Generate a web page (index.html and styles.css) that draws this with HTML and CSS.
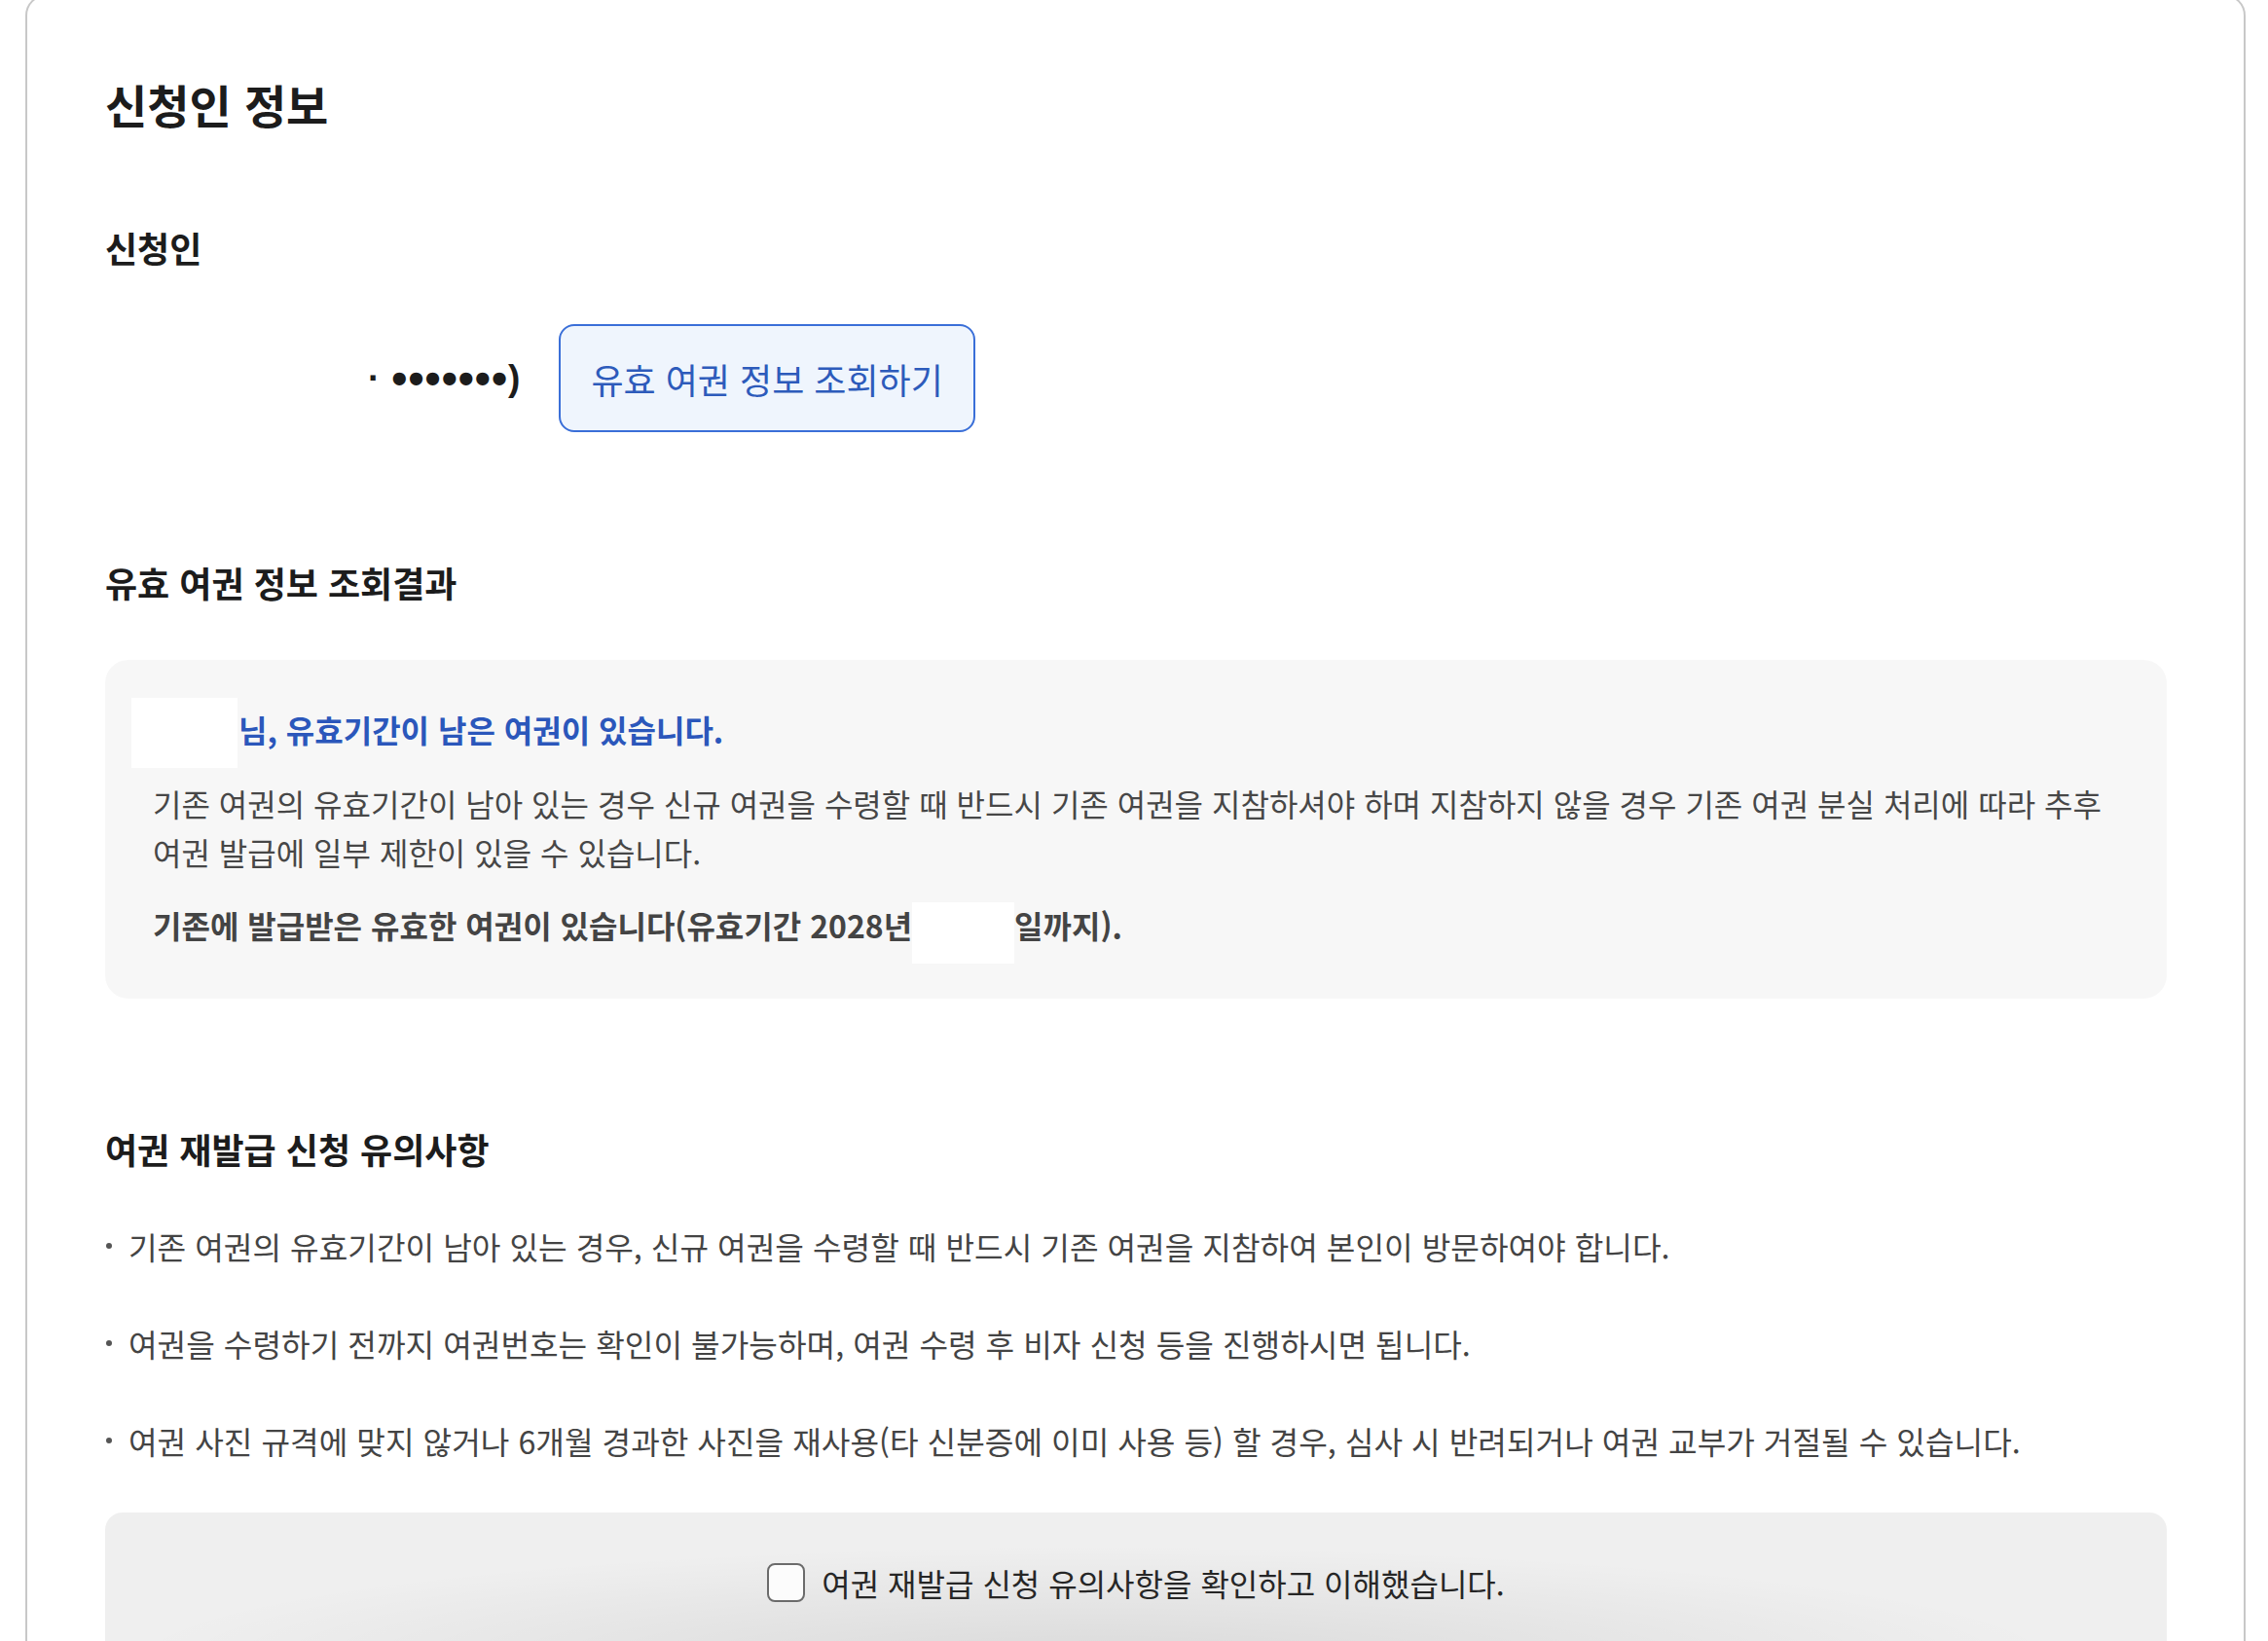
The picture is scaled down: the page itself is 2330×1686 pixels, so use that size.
FILE: index.html
```html
<!DOCTYPE html>
<html lang="ko">
<head>
<meta charset="utf-8">
<title>신청인 정보</title>
<link rel="stylesheet" href="styles.css">
</head>
<body>
<main class="card">
  <h2 class="page-title">신청인 정보</h2>

  <h3 class="section-title section-title--first">신청인</h3>
  <div class="applicant-row">
    <span class="mask mask--name"></span>
    <span class="id-text"><span class="id-sep">·</span><span class="id-dots">•••••••</span>)</span>
    <button type="button" class="lookup-btn">유효 여권 정보 조회하기</button>
  </div>

  <h3 class="section-title section-title--result">유효 여권 정보 조회결과</h3>
  <section class="result-box">
    <div class="result-title"><span class="mask mask--title"></span><span class="result-title-text">님, 유효기간이 남은 여권이 있습니다.</span></div>
    <p class="result-desc">기존 여권의 유효기간이 남아 있는 경우 신규 여권을 수령할 때 반드시 기존 여권을 지참하셔야 하며 지참하지 않을 경우 기존 여권 분실 처리에 따라 추후 여권 발급에 일부 제한이 있을 수 있습니다.</p>
    <p class="result-strong">기존에 발급받은 유효한 여권이 있습니다(유효기간 2028년<span class="mask mask--date"></span>일까지).</p>
  </section>

  <h3 class="section-title section-title--notice">여권 재발급 신청 유의사항</h3>
  <ul class="notice-list">
    <li>기존 여권의 유효기간이 남아 있는 경우, 신규 여권을 수령할 때 반드시 기존 여권을 지참하여 본인이 방문하여야 합니다.</li>
    <li>여권을 수령하기 전까지 여권번호는 확인이 불가능하며, 여권 수령 후 비자 신청 등을 진행하시면 됩니다.</li>
    <li>여권 사진 규격에 맞지 않거나 6개월 경과한 사진을 재사용(타 신분증에 이미 사용 등) 할 경우, 심사 시 반려되거나 여권 교부가 거절될 수 있습니다.</li>
  </ul>

  <div class="agree-box">
    <label class="agree-label"><span class="checkbox"></span><span class="agree-text">여권 재발급 신청 유의사항을 확인하고 이해했습니다.</span></label>
  </div>
</main>
</body>
</html>
```

FILE: styles.css
```css
* { box-sizing: border-box; }

html, body {
  margin: 0;
  padding: 0;
  background: #ffffff;
}

body {
  font-family: "Noto Sans CJK KR", "Noto Sans", sans-serif;
  color: #1c1c1c;
  overflow: hidden;
}

.card {
  margin: -6px 0 0 26px;
  width: 2281px;
  border: 2px solid #c8c8c8;
  border-radius: 22px;
  padding: 81px 79px 60px 80px;
  background: #ffffff;
}

.page-title {
  margin: 0;
  font-size: 47px;
  line-height: 60px;
  font-weight: 700;
  letter-spacing: 0;
  color: #1c1c1c;
}

.section-title {
  margin: 0;
  font-size: 36px;
  line-height: 44px;
  font-weight: 700;
  color: #1c1c1c;
}

.section-title--first { margin-top: 95px; }
.section-title--result { margin-top: 132px; }
.section-title--notice { margin-top: 132px; }

.mask {
  display: inline-block;
  background: #ffffff;
  flex-shrink: 0;
}

/* applicant row */
.applicant-row {
  margin-top: 57px;
  display: flex;
  align-items: center;
  height: 111px;
}

.mask--name {
  width: 270px;
  height: 40px;
}

.id-text {
  font-family: "Liberation Sans", "Noto Sans CJK KR", sans-serif;
  font-weight: 700;
  font-size: 37px;
  line-height: 40px;
  color: #1c1c1c;
  margin-right: 40px;
  white-space: nowrap;
}

.id-sep {
  margin-right: 12px;
}

.id-dots {
  font-size: 46px;
  line-height: 0;
  vertical-align: -4px;
  letter-spacing: 1px;
}

.lookup-btn {
  height: 111px;
  padding: 0 31px;
  border: 2px solid #3a6fd8;
  border-radius: 16px;
  background: #eff5fd;
  color: #2d5bbb;
  font-family: "Noto Sans CJK KR", "Noto Sans", sans-serif;
  font-size: 36px;
  font-weight: 400;
  line-height: 44px;
  cursor: pointer;
}

/* result box */
.result-box {
  margin-top: 58px;
  background: #f7f7f7;
  border-radius: 24px;
  padding: 49px 49px 36px 49px;
}

.result-title {
  display: flex;
  align-items: center;
  height: 44px;
}

.mask--title {
  width: 109px;
  height: 72px;
  margin: -10px 1px -18px -22px;
}

.result-title-text {
  font-size: 32px;
  line-height: 44px;
  font-weight: 700;
  color: #2b57bb;
  white-space: nowrap;
}

.result-desc {
  margin: 29px 0 0;
  font-size: 32px;
  line-height: 50px;
  color: #474747;
}

.result-strong {
  margin: 25px 0 0;
  font-size: 32px;
  line-height: 50px;
  font-weight: 700;
  color: #444444;
}

.mask--date {
  width: 105px;
  height: 63px;
  vertical-align: -26px;
}

/* notice list */
.notice-list {
  list-style: none;
  margin: 53px 0 0;
  padding: 0;
  display: flex;
  flex-direction: column;
  gap: 50px;
}

.notice-list li {
  display: flex;
  align-items: center;
  font-size: 32.2px;
  line-height: 50px;
  color: #444444;
}

.notice-list li::before {
  content: "";
  flex-shrink: 0;
  width: 6px;
  height: 6px;
  border-radius: 50%;
  background: #555555;
  margin: 0 17px 0 1px;
}

/* agreement box */
.agree-box {
  margin-top: 49px;
  border-radius: 18px;
  padding: 50px 40px 60px;
  display: flex;
  justify-content: center;
  background:
    radial-gradient(1000px 120px at 48% 100%, rgba(0, 0, 0, 0.09), rgba(0, 0, 0, 0) 100%),
    #efefef;
}

.agree-label {
  display: flex;
  align-items: center;
  gap: 17px;
  cursor: pointer;
}

.checkbox {
  width: 39px;
  height: 40px;
  border: 2px solid #6b6b6b;
  border-radius: 8px;
  background: #fcfcfc;
}

.agree-text {
  font-size: 32px;
  line-height: 44px;
  color: #262626;
}
```
